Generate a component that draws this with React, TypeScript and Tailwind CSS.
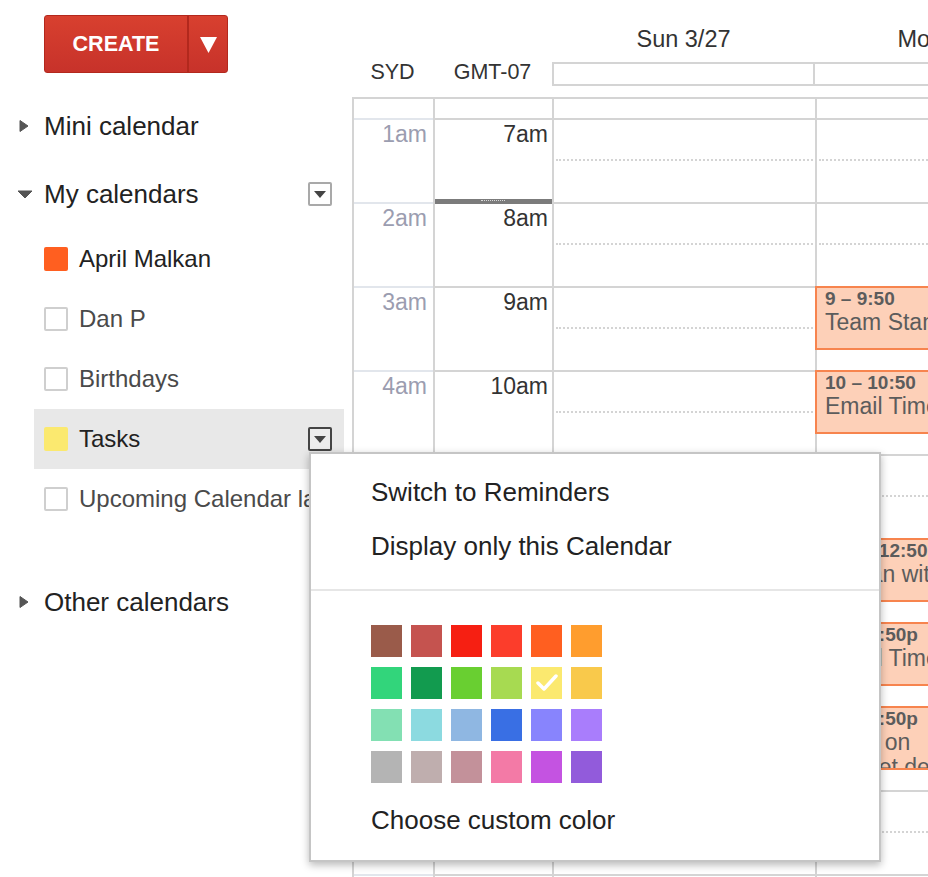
import React from "react";

const SWATCHES = [
  ["#9a5b4a", "#c5534f", "#f61f12", "#fc3d2b", "#ff5f20", "#ff9d2e"],
  ["#32d57b", "#129b4f", "#69cf31", "#a7da51", "#fbe96f", "#f9c94b"],
  ["#83e0b3", "#8cdae0", "#8fb7e2", "#396fe4", "#8884fd", "#a97dfc"],
  ["#b4b4b4", "#bfaeae", "#c3919a", "#f37aa6", "#c453e1", "#925bdb"],
];

const SYD = ["1am", "2am", "3am", "4am", "5am", "6am", "7am", "8am", "9am", "10am"];
const LOCAL = ["7am", "8am", "9am", "10am", "11am", "12pm", "1pm", "2pm", "3pm", "4pm"];

// Mon column events; top is offset from the column top (grid body starts at y=99)
const EVENTS = [
  { top: 187, time: "9 – 9:50", title: ["Team Standup"] },
  { top: 271, time: "10 – 10:50", title: ["Email Time"] },
  { top: 439, time: "12p – 12:50p", title: ["Megan with Dan"] },
  { top: 523, time: "1p – 1:50p", title: ["Email Time"] },
  { top: 607, time: "2p – 2:50p", title: ["Work on", "Budget details"] },
];

function TriRight() {
  return (
    <svg width="10" height="14" viewBox="0 0 10 14">
      <path d="M1 1.5 L9 7 L1 12.5 Z" fill="#555" stroke="#555" strokeWidth="1" strokeLinejoin="round" />
    </svg>
  );
}

function TriDown() {
  return (
    <svg width="16" height="9" viewBox="0 0 16 9">
      <path d="M1 1 L15 1 L8 8 Z" fill="#555" stroke="#555" strokeWidth="1" strokeLinejoin="round" />
    </svg>
  );
}

function MenuBox({ dark }: { dark?: boolean }) {
  return (
    <span
      className={`flex h-[24px] w-[24px] shrink-0 items-center justify-center rounded-[2px] border-2 ${
        dark ? "border-[#444] bg-[#ececec]" : "border-[#a9a9a9] bg-white"
      }`}
    >
      <svg width="12" height="7" viewBox="0 0 12 7">
        <path d="M0 0 L12 0 L6 7 Z" fill="#444" />
      </svg>
    </span>
  );
}

function CalItem({
  label,
  color,
  active,
  menu,
}: {
  label: string;
  color?: string;
  active?: boolean;
  menu?: boolean;
}) {
  return (
    <div
      className={`ml-[34px] flex h-[60px] w-[310px] items-center pl-[10px] pr-[12px] ${
        active ? "bg-[#e8e8e8]" : ""
      }`}
    >
      {color ? (
        <span className="h-[24px] w-[24px] shrink-0 rounded-[2px]" style={{ background: color }} />
      ) : (
        <span className="h-[24px] w-[24px] shrink-0 rounded-[2px] border-2 border-[#cfcfcf] bg-white" />
      )}
      <span
        className={`ml-[11px] whitespace-nowrap text-[24px] leading-[28px] ${
          color ? "text-[#222]" : "text-[#4a4a4a]"
        }`}
      >
        {label}
      </span>
      {menu && (
        <span className="ml-auto">
          <MenuBox dark />
        </span>
      )}
    </div>
  );
}

function Sidebar() {
  return (
    <aside className="w-[352px] shrink-0">
      <div className="pl-[44px] pt-[15px]">
        <div className="flex h-[58px] w-[184px] overflow-hidden rounded-[3px] border border-[#b3281d] bg-gradient-to-b from-[#d8402f] to-[#c7322a] text-white">
          <span className="flex w-[142px] items-center justify-center text-[21.5px] font-bold">CREATE</span>
          <span className="w-[2px] bg-[#b2281d]" />
          <span className="flex flex-1 items-center justify-center">
            <svg width="17" height="17" viewBox="0 0 17 17">
              <path d="M0 1 L17 1 L8.5 17 Z" fill="#fff" />
            </svg>
          </span>
        </div>
      </div>

      <div className="mt-[28px] flex h-[50px] items-center pl-[19px]">
        <TriRight />
        <span className="ml-[15px] text-[26px] leading-[30px]">Mini calendar</span>
      </div>

      <div className="mt-[18px] flex h-[50px] items-center pl-[17px] pr-[20px]">
        <TriDown />
        <span className="ml-[11px] text-[26px] leading-[30px]">My calendars</span>
        <span className="ml-auto">
          <MenuBox />
        </span>
      </div>

      <div className="mt-[10px]">
        <CalItem label="April Malkan" color="#ff5f20" />
        <CalItem label="Dan P" />
        <CalItem label="Birthdays" />
        <CalItem label="Tasks" color="#fbe96f" active menu />
        <CalItem label="Upcoming Calendar labels" />
      </div>

      <div className="mt-[48px] flex h-[50px] items-center pl-[19px]">
        <TriRight />
        <span className="ml-[15px] text-[26px] leading-[30px]">Other calendars</span>
      </div>
    </aside>
  );
}

function DayColumn({ children }: { children?: React.ReactNode }) {
  return (
    <div className="relative w-[263px] shrink-0 border-l-2 border-[#d4d4d4]">
      <div className="h-[19px]" />
      {LOCAL.map((h) => (
        <div key={h} className="h-[84px] border-t-2 border-[#d4d4d4] pt-[39px]">
          <div className="mx-[2px] border-t-2 border-dotted border-[#d4d4d4]" />
        </div>
      ))}
      {children}
    </div>
  );
}

function Grid() {
  return (
    <main className="min-w-0 flex-1 overflow-hidden">
      <div className="w-[789px]">
        <div className="flex h-[62px] text-[#333]">
          <div className="w-[200px] shrink-0" />
          <div className="w-[263px] shrink-0 pt-[25px] text-center text-[23.5px] leading-[28px]">Sun 3/27</div>
          <div className="w-[263px] shrink-0 pt-[25px] text-center text-[23.5px] leading-[28px]">Mon 3/28</div>
        </div>
        <div className="flex h-[35px] text-[#333]">
          <div className="w-[81px] shrink-0 text-center text-[21.5px] leading-[20px]">SYD</div>
          <div className="w-[119px] shrink-0 text-center text-[21.5px] leading-[20px]">GMT-07</div>
          <div className="flex h-[24px] w-[528px] shrink-0 border-2 border-[#d4d4d4]">
            <div className="w-[261px] border-r-2 border-[#d4d4d4]" />
          </div>
        </div>

        <div className="flex border-t-2 border-[#d4d4d4]">
          <div className="w-[81px] shrink-0 border-l-2 border-[#d4d4d4]">
            <div className="h-[19px]" />
            {SYD.map((h) => (
              <div
                key={h}
                className="h-[84px] border-t-2 border-[#e2e6ec] pr-[6px] pt-[1px] text-right text-[23px] leading-[26px] text-[#9b9db0]"
              >
                {h}
              </div>
            ))}
          </div>

          <div className="relative w-[119px] shrink-0 border-l-2 border-[#d4d4d4]">
            <div className="h-[19px]" />
            {LOCAL.map((h) => (
              <div
                key={h}
                className="h-[84px] border-t-2 border-[#d4d4d4] pr-[4px] pt-[1px] text-right text-[23px] leading-[26px] text-[#333]"
              >
                {h}
              </div>
            ))}
            <div className="absolute left-0 right-0 top-[100px] h-[5px] bg-[#7b7b7b]">
              <div className="absolute left-[46px] top-[1px] w-[24px] border-t-[1.5px] border-dotted border-[#d8d8d8]" />
            </div>
          </div>

          <DayColumn />
          <DayColumn>
            {EVENTS.map((e) => (
              <div
                key={e.top}
                className="absolute left-[-2px] h-[64px] w-[261px] overflow-hidden border-2 border-[#f7844e] bg-[#fdd0b8] pl-[8px] text-[#5c5c5c]"
                style={{ top: e.top }}
              >
                <div className="whitespace-nowrap text-[19px] font-bold leading-[22px]">{e.time}</div>
                {e.title.map((t) => (
                  <div key={t} className="whitespace-nowrap text-[23px] leading-[25px]">
                    {t}
                  </div>
                ))}
              </div>
            ))}
          </DayColumn>
        </div>
      </div>
    </main>
  );
}

function ColorMenu() {
  return (
    <div className="absolute left-[309px] top-[452px] z-10 h-[410px] w-[572px] border-2 border-[#c5c5c5] bg-white pt-[11px] text-[26px] text-[#222] shadow-[0_3px_8px_rgba(0,0,0,0.28)]">
      <div className="flex h-[54px] items-center pl-[60px]">Switch to Reminders</div>
      <div className="flex h-[54px] items-center pl-[60px]">Display only this Calendar</div>
      <div className="mt-[16px] h-[2px] bg-[#e6e6e6]" />
      <div className="ml-[60px] mt-[34px] grid w-max grid-cols-[repeat(6,31px)] gap-x-[9px] gap-y-[10px]">
        {SWATCHES.flat().map((c) => (
          <div key={c} className="flex h-[32px] items-center justify-center" style={{ background: c }}>
            {c === "#fbe96f" && (
              <svg width="22" height="18" viewBox="0 0 22 18">
                <path d="M2 9 L8 15 L20 2" fill="none" stroke="#fff" strokeWidth="3.5" strokeLinecap="round" strokeLinejoin="round" />
              </svg>
            )}
          </div>
        ))}
      </div>
      <div className="mt-[22px] pl-[60px] leading-[30px]">Choose custom color</div>
    </div>
  );
}

export default function App() {
  return (
    <div className="relative flex h-[877px] w-[928px] overflow-hidden bg-white font-['Liberation_Sans',Arial,sans-serif] text-[#222]">
      <Sidebar />
      <Grid />
      <ColorMenu />
    </div>
  );
}
